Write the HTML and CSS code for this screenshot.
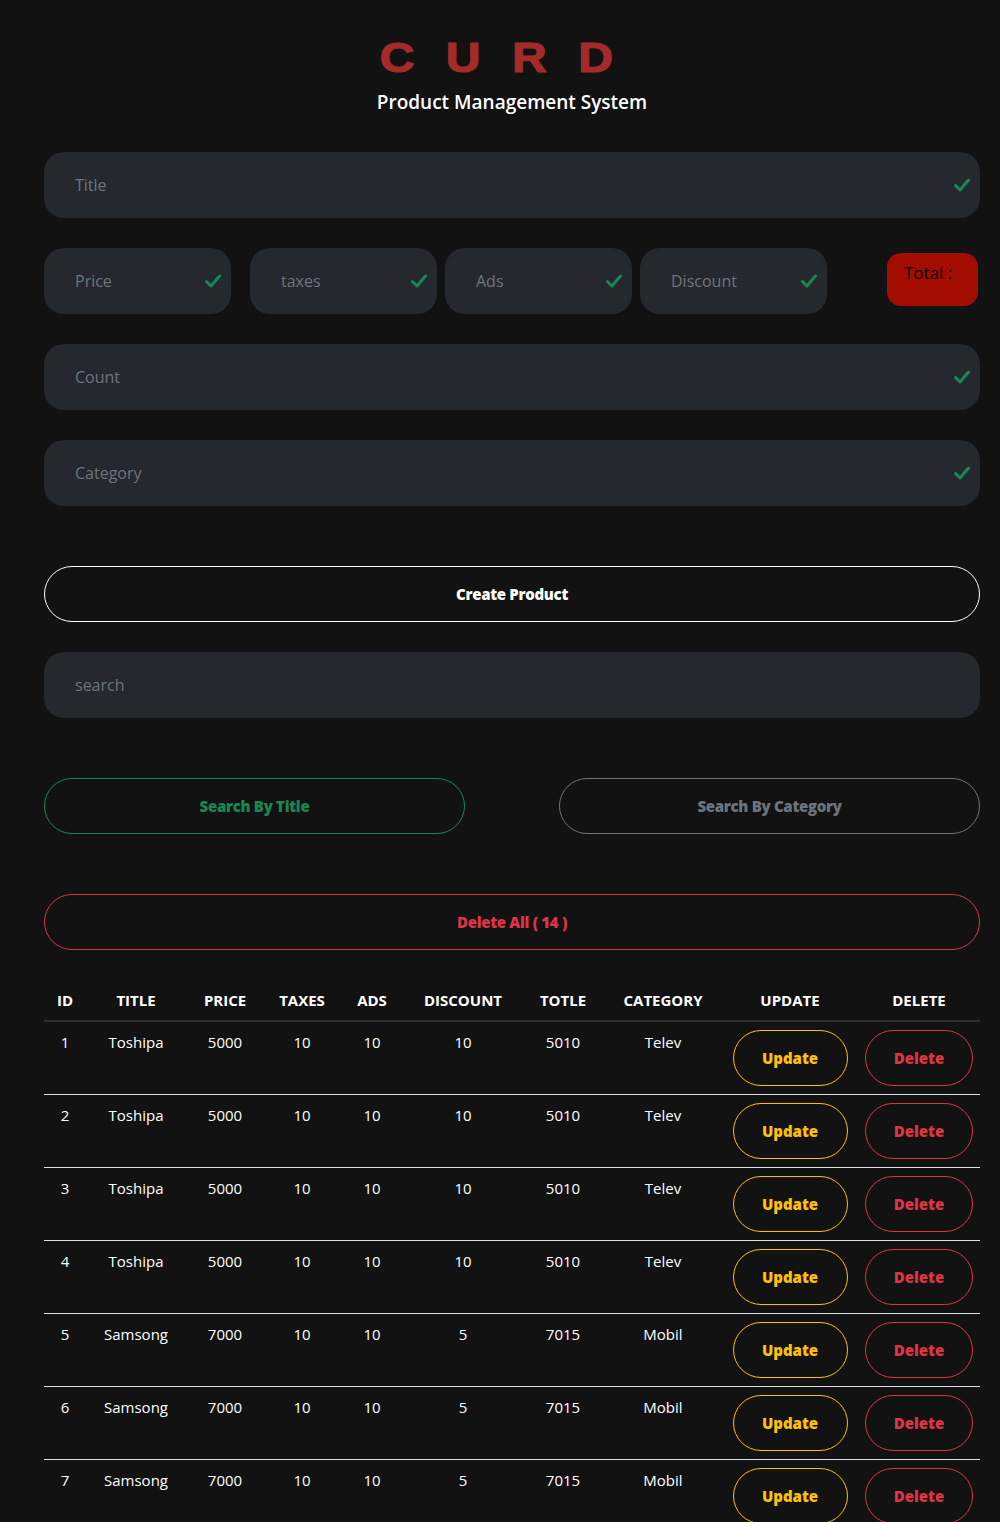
FILE: index.html
```html
<!DOCTYPE html>
<html lang="en">
<head>
<meta charset="utf-8">
<title>CURD</title>
<link rel="stylesheet" href="styles.css">
</head>
<body>
<div class="page">
  <header class="head">
    <h1 class="logo">CURD</h1>
    <p class="subtitle">Product Management System</p>
  </header>

  <div class="form">
    <div class="field">
      <input type="text" placeholder="Title">
      <svg class="check" width="16" height="14" viewBox="0 0 16 14"><polyline points="1.5,7.5 6,12 14.5,2" fill="none" stroke="#198754" stroke-width="3" stroke-linecap="round" stroke-linejoin="round"/></svg>
    </div>

    <div class="price-row">
      <div class="field small">
        <input type="text" placeholder="Price">
        <svg class="check" width="16" height="14" viewBox="0 0 16 14"><polyline points="1.5,7.5 6,12 14.5,2" fill="none" stroke="#198754" stroke-width="3" stroke-linecap="round" stroke-linejoin="round"/></svg>
      </div>
      <div class="field small first-gap">
        <input type="text" placeholder="taxes">
        <svg class="check" width="16" height="14" viewBox="0 0 16 14"><polyline points="1.5,7.5 6,12 14.5,2" fill="none" stroke="#198754" stroke-width="3" stroke-linecap="round" stroke-linejoin="round"/></svg>
      </div>
      <div class="field small">
        <input type="text" placeholder="Ads">
        <svg class="check" width="16" height="14" viewBox="0 0 16 14"><polyline points="1.5,7.5 6,12 14.5,2" fill="none" stroke="#198754" stroke-width="3" stroke-linecap="round" stroke-linejoin="round"/></svg>
      </div>
      <div class="field small">
        <input type="text" placeholder="Discount">
        <svg class="check" width="16" height="14" viewBox="0 0 16 14"><polyline points="1.5,7.5 6,12 14.5,2" fill="none" stroke="#198754" stroke-width="3" stroke-linecap="round" stroke-linejoin="round"/></svg>
      </div>
      <div class="total">Total :</div>
    </div>

    <div class="field">
      <input type="text" placeholder="Count">
      <svg class="check" width="16" height="14" viewBox="0 0 16 14"><polyline points="1.5,7.5 6,12 14.5,2" fill="none" stroke="#198754" stroke-width="3" stroke-linecap="round" stroke-linejoin="round"/></svg>
    </div>
    <div class="field">
      <input type="text" placeholder="Category">
      <svg class="check" width="16" height="14" viewBox="0 0 16 14"><polyline points="1.5,7.5 6,12 14.5,2" fill="none" stroke="#198754" stroke-width="3" stroke-linecap="round" stroke-linejoin="round"/></svg>
    </div>
  </div>

  <button class="btn btn-create">Create Product</button>

  <div class="field search">
    <input type="text" placeholder="search">
  </div>

  <div class="search-btns">
    <button class="btn btn-green">Search By Title</button>
    <button class="btn btn-grey">Search By Category</button>
  </div>

  <button class="btn btn-red btn-delall">Delete All ( 14 )</button>

  <table class="table">
    <colgroup>
      <col class="c-id"><col class="c-title"><col class="c-price"><col class="c-taxes"><col class="c-ads"><col class="c-disc"><col class="c-total"><col class="c-cat"><col class="c-upd"><col class="c-del">
    </colgroup>
    <thead>
      <tr><th>ID</th><th>TITLE</th><th>PRICE</th><th>TAXES</th><th>ADS</th><th>DISCOUNT</th><th>TOTLE</th><th>CATEGORY</th><th>UPDATE</th><th>DELETE</th></tr>
    </thead>
    <tbody>
      <tr><td>1</td><td>Toshipa</td><td>5000</td><td>10</td><td>10</td><td>10</td><td>5010</td><td>Telev</td><td><button class="tbtn upd">Update</button></td><td><button class="tbtn del">Delete</button></td></tr>
      <tr><td>2</td><td>Toshipa</td><td>5000</td><td>10</td><td>10</td><td>10</td><td>5010</td><td>Telev</td><td><button class="tbtn upd">Update</button></td><td><button class="tbtn del">Delete</button></td></tr>
      <tr><td>3</td><td>Toshipa</td><td>5000</td><td>10</td><td>10</td><td>10</td><td>5010</td><td>Telev</td><td><button class="tbtn upd">Update</button></td><td><button class="tbtn del">Delete</button></td></tr>
      <tr><td>4</td><td>Toshipa</td><td>5000</td><td>10</td><td>10</td><td>10</td><td>5010</td><td>Telev</td><td><button class="tbtn upd">Update</button></td><td><button class="tbtn del">Delete</button></td></tr>
      <tr><td>5</td><td>Samsong</td><td>7000</td><td>10</td><td>10</td><td>5</td><td>7015</td><td>Mobil</td><td><button class="tbtn upd">Update</button></td><td><button class="tbtn del">Delete</button></td></tr>
      <tr><td>6</td><td>Samsong</td><td>7000</td><td>10</td><td>10</td><td>5</td><td>7015</td><td>Mobil</td><td><button class="tbtn upd">Update</button></td><td><button class="tbtn del">Delete</button></td></tr>
      <tr><td>7</td><td>Samsong</td><td>7000</td><td>10</td><td>10</td><td>5</td><td>7015</td><td>Mobil</td><td><button class="tbtn upd">Update</button></td><td><button class="tbtn del">Delete</button></td></tr>
    </tbody>
  </table>
</div>
</body>
</html>
```
FILE: styles.css
```css
* { box-sizing: border-box; }
html, body { margin: 0; padding: 0; background: #121212; }
body {
  font-family: "Open Sans", "Noto Sans", sans-serif;
  color: #fff;
}
.page {
  padding: 35px 20px 0 44px;
}
.head { text-align: center; }
.logo {
  margin: 0;
  font-family: "Liberation Sans", Arial, sans-serif;
  font-weight: 900;
  font-size: 43px;
  line-height: 44px;
  letter-spacing: 28px;
  padding-left: 0;
  color: #a52a2a;
  -webkit-text-stroke: 1.2px #a52a2a;
  transform: scaleX(1.12);
}
.subtitle {
  margin: 11px 0 0;
  font-size: 19px;
  line-height: 24px;
  font-weight: 600;
  color: #fff;
}
.form {
  margin-top: 38px;
  display: flex;
  flex-direction: column;
  gap: 30px;
}
.field {
  display: flex;
  align-items: center;
  height: 66px;
  background: #25282c;
  border-radius: 20px;
  padding: 0 10px 0 31px;
}
.field input {
  flex: 1;
  min-width: 0;
  background: transparent;
  border: none;
  outline: none;
  font-family: "Open Sans", "Noto Sans", sans-serif;
  font-size: 16px;
  color: #fff;
  padding: 0;
}
.field input::placeholder { color: #6c757d; }
.check { flex: none; }
.price-row {
  display: flex;
  align-items: flex-start;
  gap: 8px;
}
.field.small { width: 187px; flex: none; }
.field.small.first-gap { margin-left: 11px; }
.total {
  margin-left: auto;
  margin-right: 2px;
  margin-top: 5px;
  width: 91px;
  height: 53px;
  background: #a20d00;
  border-radius: 14px;
  padding: 8px 0 0 17px;
  color: #000;
  font-size: 17px;
  line-height: 24px;
}
.btn {
  display: block;
  width: 100%;
  height: 56px;
  background: transparent;
  border-radius: 28px;
  font-family: "Open Sans", "Noto Sans", sans-serif;
  font-weight: 800;
  font-size: 15px;
  letter-spacing: -0.3px;
  cursor: pointer;
}
.btn-create {
  margin-top: 60px;
  border: 1px solid #fff;
  color: #fff;
}
.search { margin-top: 30px; }
.search-btns {
  margin-top: 60px;
  display: flex;
  justify-content: space-between;
}
.search-btns .btn { width: 421px; }
.btn-green { border: 1px solid #198754; color: #198754; }
.btn-grey { border: 1px solid #6c757d; color: #6c757d; }
.btn-red { border: 1px solid #dc3545; color: #dc3545; }
.btn-delall { margin-top: 60px; }
.table {
  margin-top: 30px;
  width: 936px;
  border-collapse: collapse;
  table-layout: fixed;
}
.c-id { width: 42px; }
.c-title { width: 100px; }
.c-price { width: 78px; }
.c-taxes { width: 76px; }
.c-ads { width: 64px; }
.c-disc { width: 118px; }
.c-total { width: 82px; }
.c-cat { width: 118px; }
.c-upd { width: 136px; }
.c-del { width: 122px; }
.table th {
  padding: 8px 0;
  font-size: 15px;
  line-height: 24px;
  font-weight: 700;
  text-align: center;
  border-bottom: 2px solid #2b2e32;
}
.table td {
  padding: 8px 0;
  font-size: 15px;
  line-height: 24px;
  text-align: center;
  vertical-align: top;
  border-bottom: 1px solid #dee2e6;
}
.tbtn {
  display: inline-block;
  height: 56px;
  background: transparent;
  border-radius: 28px;
  font-family: "Open Sans", "Noto Sans", sans-serif;
  font-weight: 800;
  font-size: 15px;
  padding: 0;
  cursor: pointer;
}
.tbtn.upd { width: 115px; border: 1px solid #ffc107; color: #ffc107; }
.tbtn.del { width: 108px; border: 1px solid #dc3545; color: #dc3545; }
```
